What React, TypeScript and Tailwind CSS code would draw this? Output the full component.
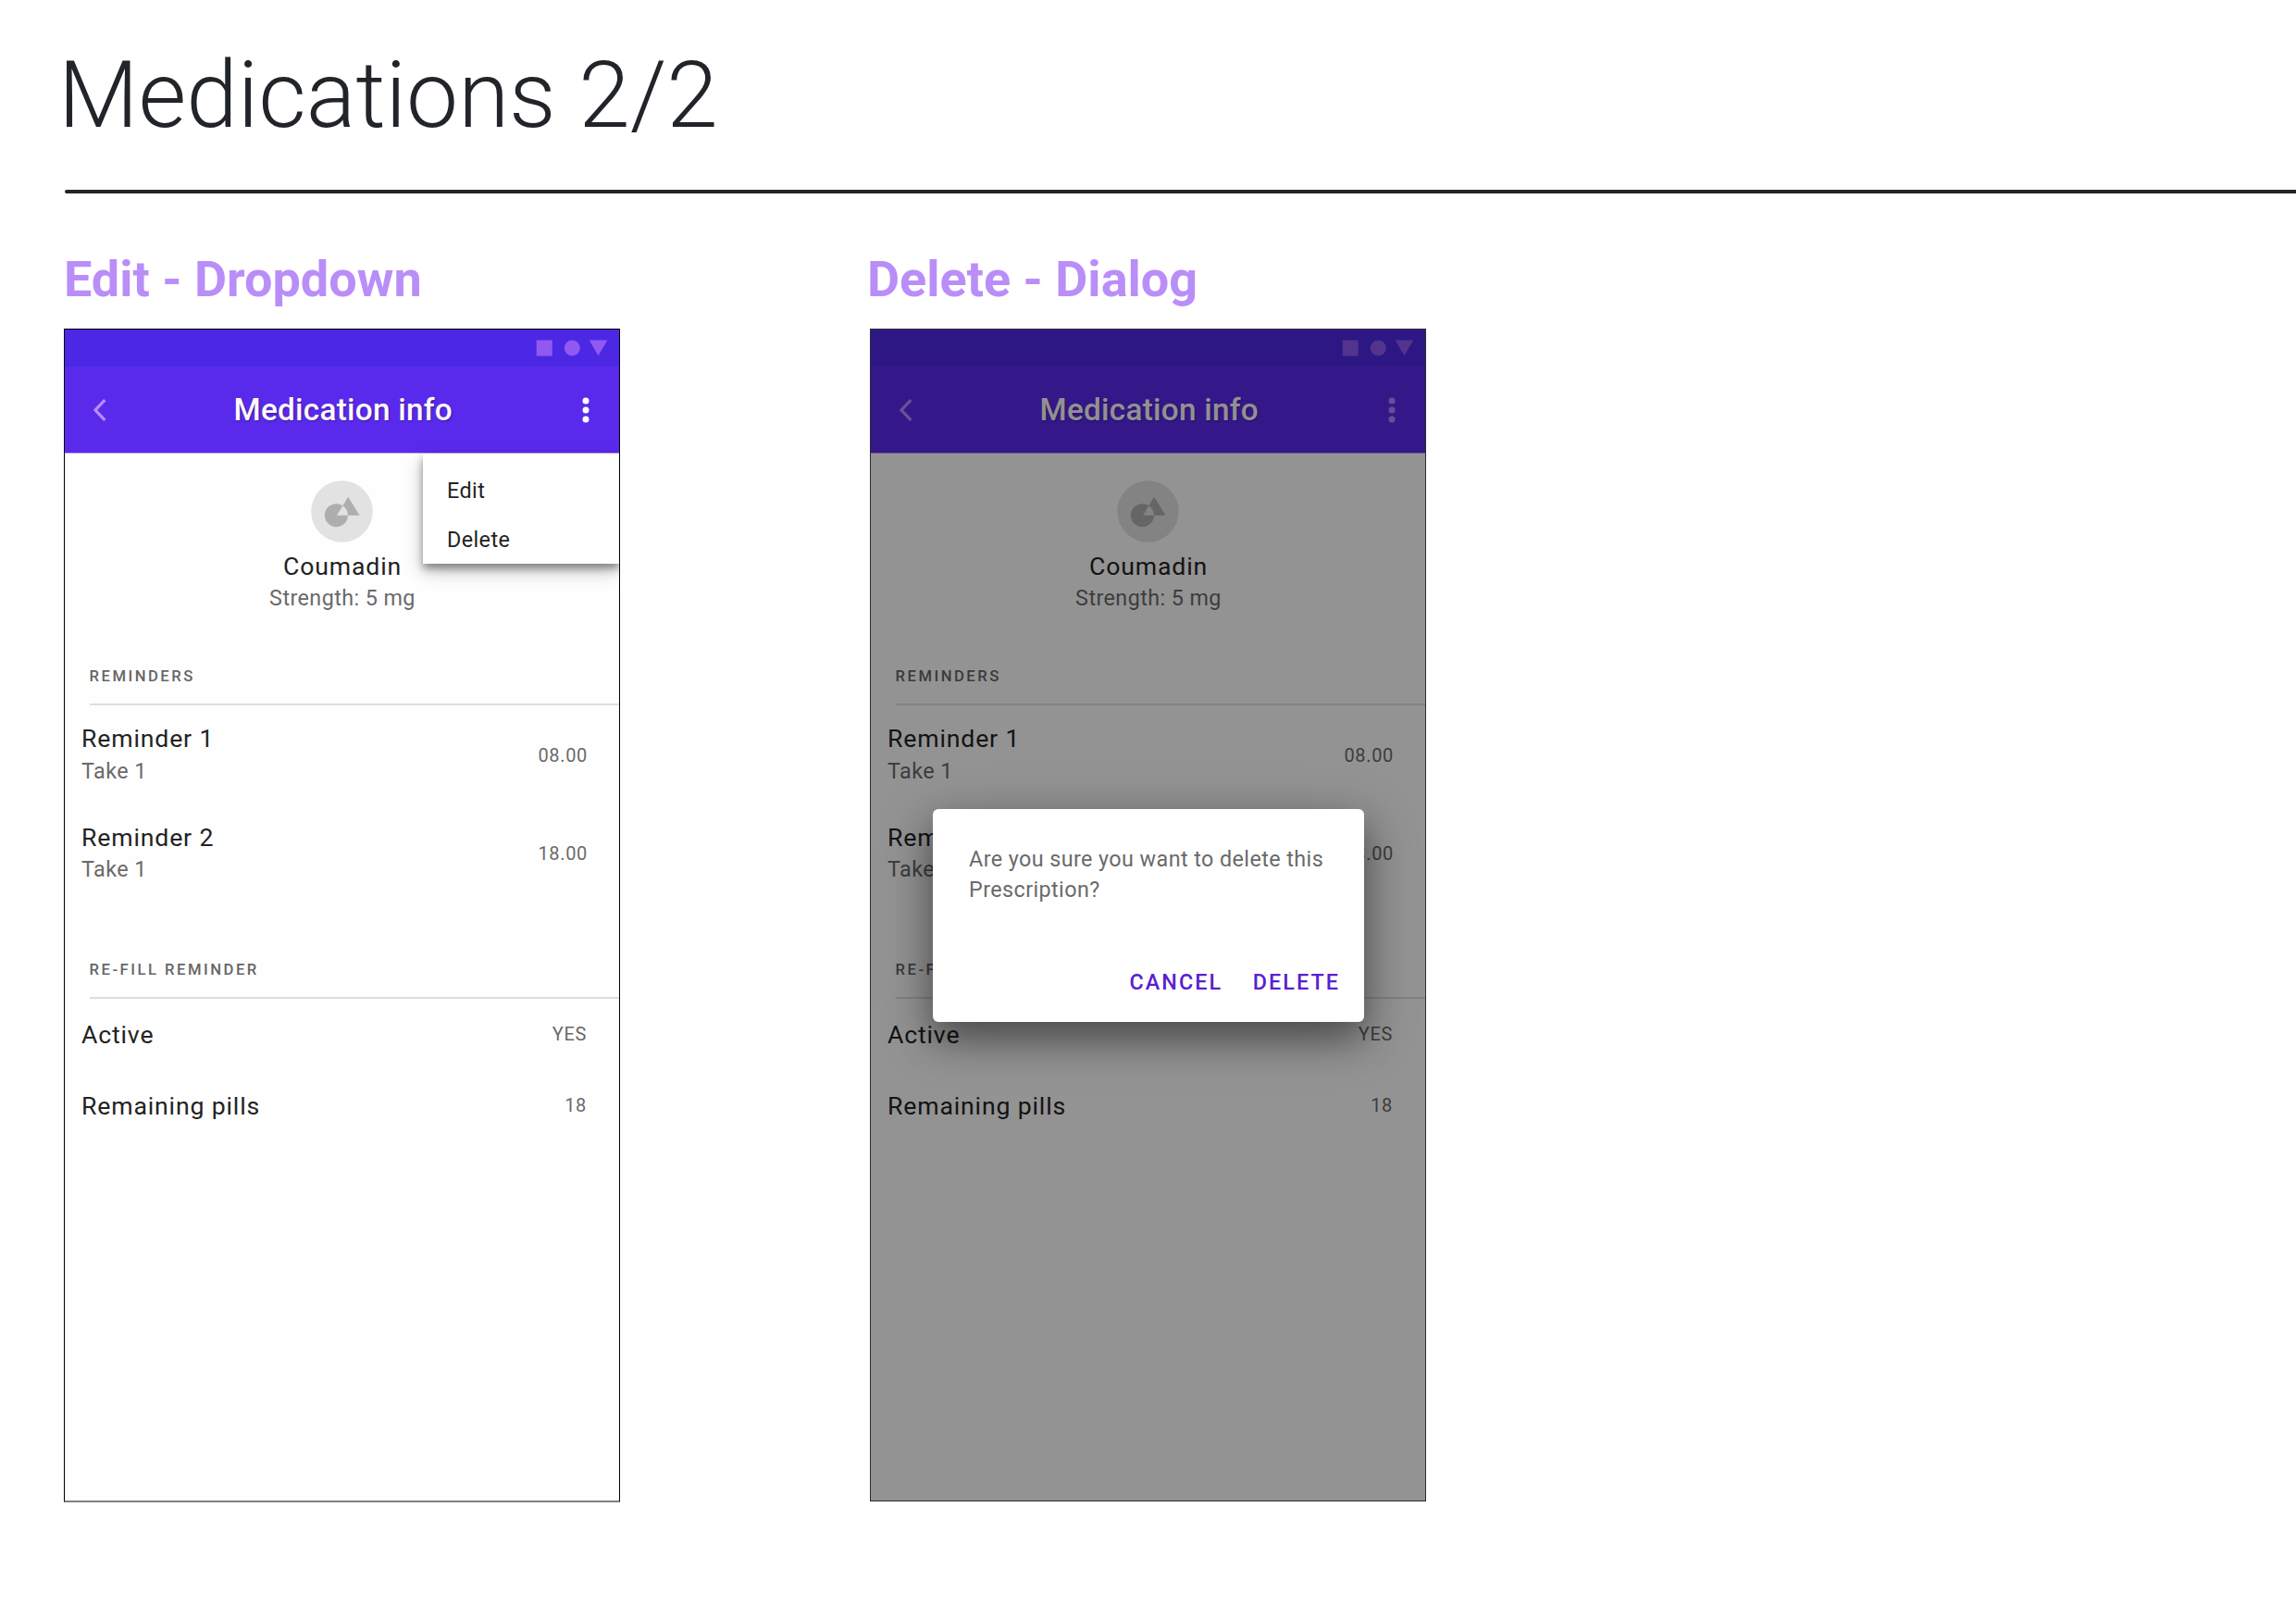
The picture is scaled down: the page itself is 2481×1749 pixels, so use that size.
import React from "react";

function StatusBar() {
  return (
    <div className="flex h-[40px] justify-end bg-[#4c28e5] pt-[11px] pr-[12px] text-[#9159f2]">
      <svg width="78" height="18" viewBox="0 0 78 18" fill="currentColor">
        <rect x="0.7" y="0.5" width="17" height="17" />
        <circle cx="39.3" cy="9" r="8.5" />
        <path d="M57.7 0.5H77.3L67.5 17.3Z" />
      </svg>
    </div>
  );
}

function Toolbar({ dimmed }: { dimmed: boolean }) {
  return (
    <div className="flex h-[94px] items-center border-b border-[#c79df5] bg-[#5a2aec]">
      <svg className="ml-[30px] shrink-0 text-[#bd8bfa]" width="16" height="26" viewBox="0 0 16 26" fill="none" stroke="currentColor" strokeWidth="3.2">
        <path d="M13.3 2.2L3 13L13.3 23.8" />
      </svg>
      <h3 className="mt-[1px] ml-[136.5px] w-[242px] shrink-0 text-[33.33px] leading-[40px] font-medium tracking-[0.25px] whitespace-nowrap text-[#fdf8ff] [text-shadow:1px_1px_2px_rgba(0,0,0,0.35)]">
        Medication info
      </h3>
      <svg className={dimmed ? "ml-[133.5px] text-[#b687fa]" : "ml-[133.5px] text-white"} width="10" height="30" viewBox="0 0 10 30" fill="currentColor">
        <circle cx="5" cy="5" r="3.5" />
        <circle cx="5" cy="15" r="3.5" />
        <circle cx="5" cy="25" r="3.5" />
      </svg>
    </div>
  );
}

function Avatar() {
  return (
    <svg className="mx-auto block" width="67" height="67" viewBox="0 0 67 67">
      <circle cx="33.5" cy="33.5" r="33.3" fill="#e2e2e2" />
      <path
        fill="#aeaeae"
        fillRule="evenodd"
        d="M27.4 25.2a12.5 12.5 0 1 0 0 25a12.5 12.5 0 1 0 0 -25ZM40.2 17.7L52.5 37.7H28Z"
      />
    </svg>
  );
}

function SectionTitle({ children }: { children: string }) {
  return (
    <div className="ml-[27px] h-[44px] border-b-2 border-[#dedede]">
      <div className="-ml-[0.5px] pt-px text-[16.67px] leading-[24px] font-medium tracking-[2.5px] text-[#666666]">{children}</div>
    </div>
  );
}

function Reminder({ name, time }: { name: string; time: string }) {
  return (
    <div className="flex h-[106.7px] justify-between pr-[34px] pl-[18px]">
      <div>
        <div className="text-[26.67px] leading-[36px] tracking-[0.83px] text-[#232323]">{name}</div>
        <div className="mt-[0.6px] text-[23.33px] leading-[32px] tracking-[0.42px] text-[#6a6a6a]">Take 1</div>
      </div>
      <div className="mt-[21.5px] text-[20px] leading-[28px] tracking-[0.67px] text-[#6a6a6a]">{time}</div>
    </div>
  );
}

function Detail({ name, value }: { name: string; value: string }) {
  return (
    <div className="flex h-[76.7px] justify-between pr-[35px] pl-[18px]">
      <div className="text-[26.67px] leading-[36px] tracking-[0.83px] text-[#232323]">{name}</div>
      <div className="mt-[3px] text-[20px] leading-[28px] tracking-[0.67px] text-[#6a6a6a]">{value}</div>
    </div>
  );
}

function Menu() {
  return (
    <div className="absolute top-[134px] right-0 h-[119px] w-[212px] bg-white pt-[13px] pl-[26px] text-[23.33px] leading-[53.33px] tracking-[0.42px] text-[#232323] shadow-[0_5px_8px_rgba(0,0,0,0.35),0_8px_18px_rgba(0,0,0,0.25)]">
      <div className="mt-[0.5px]">Edit</div>
      <div>Delete</div>
    </div>
  );
}

function Dialog() {
  return (
    <div className="absolute inset-0 bg-black/[0.42]">
      <div className="absolute top-[518px] left-[66.5px] h-[230px] w-[466.5px] rounded-[6px] bg-white shadow-[0_18px_36px_rgba(0,0,0,0.34),0_14px_60px_rgba(0,0,0,0.25)]">
        <p className="mt-[38px] ml-[39.5px] text-[23.33px] leading-[33.33px] tracking-[0.42px] text-[#6a6a6a]">
          Are you sure you want to delete this
          <br />
          Prescription?
        </p>
        <div className="mt-[66px] flex justify-end gap-[32.5px] pr-[26px] text-[23.33px] leading-[33px] font-medium tracking-[2.08px] text-[#5a20d0]">
          <span>CANCEL</span>
          <span>DELETE</span>
        </div>
      </div>
    </div>
  );
}

function Phone({ overlay }: { overlay: "menu" | "dialog" }) {
  return (
    <div
      className={
        overlay === "menu"
          ? "relative h-[1268px] w-[601px] overflow-hidden border border-b-2 border-black border-b-[#808080] bg-[#fefefe]"
          : "relative h-[1267px] w-[601px] overflow-hidden border border-[#2c2c2c] bg-[#fefefe]"
      }
    >
      <StatusBar />
      <Toolbar dimmed={overlay === "dialog"} />
      <div className="pt-[29px] text-center">
        <Avatar />
        <div className="mt-[8px] pl-[1px] text-[26.67px] leading-[36px] tracking-[0.83px] text-[#232323]">Coumadin</div>
        <div className="pl-[1px] text-[23.33px] leading-[32px] tracking-[0.42px] text-[#6a6a6a]">Strength: 5 mg</div>
      </div>
      <div className="mt-[56px]">
        <SectionTitle>REMINDERS</SectionTitle>
        <div className="pt-[18px]">
          <Reminder name="Reminder 1" time="08.00" />
          <Reminder name="Reminder 2" time="18.00" />
        </div>
      </div>
      <div className="mt-[41.6px]">
        <SectionTitle>RE-FILL REMINDER</SectionTitle>
        <div className="pt-[21.4px]">
          <Detail name="Active" value="YES" />
          <Detail name="Remaining pills" value="18" />
        </div>
      </div>
      {overlay === "menu" ? <Menu /> : <Dialog />}
    </div>
  );
}

function Column({ title, overlay }: { title: string; overlay: "menu" | "dialog" }) {
  return (
    <section>
      <h2
        className={
          overlay === "menu"
            ? "mb-[22px] text-[54px] leading-[63px] font-bold whitespace-nowrap text-[#b98ef8]"
            : "mb-[22px] -ml-[3px] text-[54px] leading-[63px] font-bold whitespace-nowrap text-[#b98ef8]"
        }
      >
        {title}
      </h2>
      <Phone overlay={overlay} />
    </section>
  );
}

export default function App() {
  return (
    <main className="h-[1749px] w-[2481px] overflow-hidden bg-white pl-[69px] font-['Roboto',sans-serif]">
      <h1 className="-ml-[6px] pt-[43px] text-[100px] leading-[119px] font-light text-[#212529]">Medications 2/2</h1>
      <div className="mt-[43px] ml-[1px] h-[4px] rounded-l-full bg-[#212529]" />
      <div className="mt-[61px] flex gap-[270px]">
        <Column title="Edit - Dropdown" overlay="menu" />
        <Column title="Delete - Dialog" overlay="dialog" />
      </div>
    </main>
  );
}
